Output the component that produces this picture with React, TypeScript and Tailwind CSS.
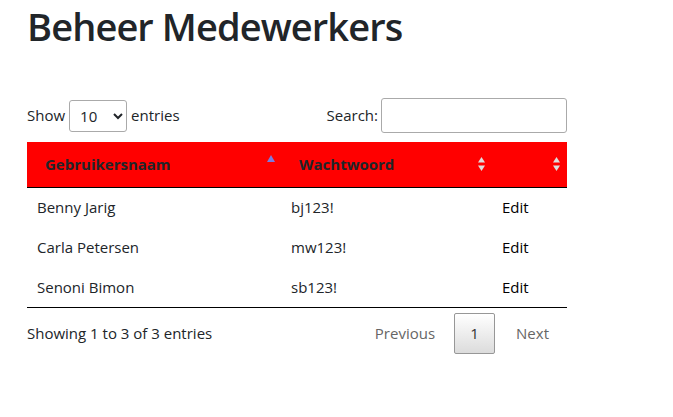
import { useState } from "react";

const users = [
  { name: "Benny Jarig", password: "bj123!" },
  { name: "Carla Petersen", password: "mw123!" },
  { name: "Senoni Bimon", password: "sb123!" },
];

const SortBoth = () => (
  <svg width="7" height="14" viewBox="0 0 7 14" className="absolute right-[7px] top-1/2 -translate-y-1/2">
    <path d="M3.5 0 L7 5.5 H0 Z" fill="#dddddd" />
    <path d="M3.5 14 L7 8.5 H0 Z" fill="#dddddd" />
  </svg>
);

const SortAsc = () => (
  <svg width="8" height="7" viewBox="0 0 8 7" className="absolute right-[6px] top-[13px]">
    <path d="M4 0 L8 7 H0 Z" fill="#7b7be0" />
  </svg>
);

const App = () => {
  const [pageSize, setPageSize] = useState("10");
  const [search, setSearch] = useState("");

  return (
    <div className="min-h-screen bg-white px-[27px] text-[#212529]" style={{ fontFamily: '"Open Sans", "Noto Sans", sans-serif' }}>
      <h1 className="pt-[2px] text-[38px] font-semibold leading-[48px] tracking-[-0.9px]">Beheer Medewerkers</h1>

      <div className="mt-[48px] flex w-[540px] items-center justify-between text-[15px]">
        <label className="flex items-center gap-[4px]">
          Show
          <select
            value={pageSize}
            onChange={(e) => setPageSize(e.target.value)}
            className="h-[32px] w-[58px] rounded-[3px] border border-[#aaa] bg-white pl-[6px] text-[15px]"
          >
            <option>10</option>
            <option>25</option>
            <option>50</option>
            <option>100</option>
          </select>
          entries
        </label>
        <label className="flex items-center gap-[3px]">
          Search:
          <input
            value={search}
            onChange={(e) => setSearch(e.target.value)}
            className="h-[35px] w-[186px] rounded-[3px] border border-[#aaa] bg-white px-2"
          />
        </label>
      </div>

      <table className="mt-[9px] w-[540px] border-collapse text-[15px]">
        <thead>
          <tr className="h-[45px] border-b border-black bg-[#ff0000] text-left">
            <th className="relative w-[254px] pl-[18px] font-bold">
              Gebruikersnaam
              <SortAsc />
            </th>
            <th className="relative w-[211px] pl-[18px] font-bold">
              Wachtwoord
              <SortBoth />
            </th>
            <th className="relative w-[75px]">
              <SortBoth />
            </th>
          </tr>
        </thead>
        <tbody>
          {users.map((u, i) => (
            <tr key={u.name} className={`h-[40px] ${i === users.length - 1 ? "border-b border-black" : ""}`}>
              <td className="pl-[10px]">{u.name}</td>
              <td className="pl-[10px]">{u.password}</td>
              <td className="pl-[10px] text-black">Edit</td>
            </tr>
          ))}
        </tbody>
      </table>

      <div className="mt-[5px] flex w-[540px] items-center justify-between text-[15px]">
        <div>Showing 1 to 3 of 3 entries</div>
        <div className="flex items-center">
          <span className="pl-[14px] pr-[19px] text-[#666]">Previous</span>
          <span className="flex h-[41px] w-[41px] items-center justify-center rounded-[2px] border border-[#979797] bg-gradient-to-b from-white to-[#dcdcdc] text-[#333]">
            1
          </span>
          <span className="pl-[21px] pr-[18px] text-[#666]">Next</span>
        </div>
      </div>
    </div>
  );
};

export default App;
